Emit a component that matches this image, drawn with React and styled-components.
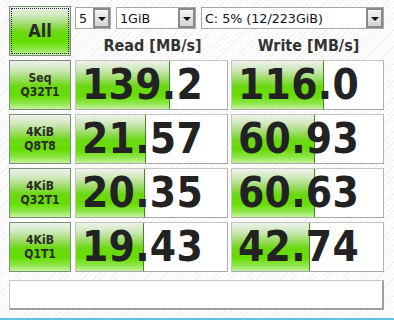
import React from "react";
import styled, { createGlobalStyle } from "styled-components";

const GlobalStyle = createGlobalStyle`
  html, body {
    margin: 0;
    padding: 0;
  }
  body {
    font-family: "DejaVu Sans Condensed", "DejaVu Sans", sans-serif;
    font-stretch: condensed;
  }
`;

const rows = [
  { top: "Seq", bottom: "Q32T1", read: "139.2", write: "116.0", rw: 94, ww: 92 },
  { top: "4KiB", bottom: "Q8T8", read: "21.57", write: "60.93", rw: 70, ww: 83 },
  { top: "4KiB", bottom: "Q32T1", read: "20.35", write: "60.63", rw: 69, ww: 83 },
  { top: "4KiB", bottom: "Q1T1", read: "19.43", write: "42.74", rw: 68, ww: 78 },
];

const green = `linear-gradient(
  to bottom,
  #eef2ea 0%,
  #cfe8bc 18%,
  #9fdc6a 36%,
  #6cd814 52%,
  #66dd00 72%,
  #8ee64a 88%,
  #c4f49c 100%
)`;

const Page = styled.div`
  width: 394px;
  height: 320px;
  display: flex;
  flex-direction: column;
  box-sizing: border-box;
  background: repeating-linear-gradient(
    135deg,
    #ffffff 0px,
    #ffffff 3px,
    #f1f1f1 3px,
    #f1f1f1 4px
  );
`;

const Board = styled.div`
  display: grid;
  grid-template-columns: 63px 153px 153px;
  grid-auto-rows: 50px;
  column-gap: 3px;
  row-gap: 4px;
  padding: 6px 0 0 9px;
`;

const GreenButton = styled.div`
  width: 62px;
  box-sizing: border-box;
  border: 1px solid #7c8f7c;
  background: ${green};
  color: #2a2a2a;
  font-weight: bold;
  display: flex;
  flex-direction: column;
  align-items: center;
  justify-content: center;
  text-align: center;
  font-size: ${(p) => (p.$big ? "18px" : "12px")};
  line-height: ${(p) => (p.$big ? "20px" : "14px")};
  outline: ${(p) => (p.$focus ? "1px dotted #302050" : "none")};
  outline-offset: -3px;
`;

const TopCell = styled.div`
  grid-column: 2 / span 2;
  display: flex;
  flex-direction: column;
`;

const Combos = styled.div`
  display: flex;
  gap: 5px;
  margin-top: 1px;
`;

const Combo = styled.div`
  width: ${(p) => p.$w}px;
  height: 22px;
  box-sizing: border-box;
  border: 1px solid #a8a8a8;
  background: #fff;
  display: flex;
  align-items: center;
  font-family: "DejaVu Sans", sans-serif;
  font-stretch: normal;
  font-size: 12.7px;
  color: #101018;
`;

const ComboText = styled.span`
  flex: 1;
  padding-left: 3px;
  white-space: nowrap;
  overflow: hidden;
`;

const Arrow = styled.span`
  width: 17px;
  height: 20px;
  box-sizing: border-box;
  border: 2px solid #8a8a8a;
  background: linear-gradient(to bottom, #f4f4f4, #d4d4d4);
  display: flex;
  align-items: center;
  justify-content: center;
  &::after {
    content: "";
    border-left: 4px solid transparent;
    border-right: 4px solid transparent;
    border-top: 4px solid #111;
    margin-top: 1px;
  }
`;

const Headers = styled.div`
  display: grid;
  grid-template-columns: 153px 153px;
  column-gap: 3px;
  margin-top: 7px;
`;

const Header = styled.div`
  text-align: center;
  font-weight: bold;
  font-size: 16px;
  color: #333;
  padding-left: ${(p) => p.$shift || 0}px;
`;

const ValueBox = styled.div`
  position: relative;
  box-sizing: border-box;
  border: 1px solid #c4c4c4;
  border-right-color: #b0b0b0;
  border-bottom-color: #a8a8a8;
  background: #fff;
  overflow: hidden;
  display: flex;
  align-items: center;
`;

const Bar = styled.div`
  position: absolute;
  left: 0;
  top: 0;
  bottom: 0;
  box-sizing: border-box;
  border-right: 1px solid #3f8a1f;
  background: ${green};
`;

const Value = styled.span`
  position: relative;
  padding-left: 6px;
  font-size: 42px;
  font-weight: bold;
  color: #222;
  line-height: 48px;
  letter-spacing: 0.3px;
`;

const Status = styled.div`
  margin: 8px 0 0 9px;
  width: 375px;
  height: 30px;
  box-sizing: border-box;
  border: 1px solid #c8c8c8;
  border-right: 2px solid #a0a0a0;
  border-bottom: 2px solid #a0a0a0;
  background: #fff;
`;

const BlueLine = styled.div`
  margin-top: auto;
  height: 2px;
  background: #5cc3e4;
`;

export default function App() {
  return (
    <>
      <GlobalStyle />
      <Page>
        <Board>
          <GreenButton $big $focus>
            All
          </GreenButton>
          <TopCell>
            <Combos>
              <Combo $w={36}>
                <ComboText>5</ComboText>
                <Arrow />
              </Combo>
              <Combo $w={80}>
                <ComboText>1GiB</ComboText>
                <Arrow />
              </Combo>
              <Combo $w={183}>
                <ComboText>C: 5% (12/223GiB)</ComboText>
                <Arrow />
              </Combo>
            </Combos>
            <Headers>
              <Header $shift={2}>Read [MB/s]</Header>
              <Header $shift={2}>Write [MB/s]</Header>
            </Headers>
          </TopCell>
          {rows.map((r, i) => (
            <React.Fragment key={i}>
              <GreenButton>
                <span>{r.top}</span>
                <span>{r.bottom}</span>
              </GreenButton>
              <ValueBox>
                <Bar style={{ width: r.rw }} />
                <Value>{r.read}</Value>
              </ValueBox>
              <ValueBox>
                <Bar style={{ width: r.ww }} />
                <Value>{r.write}</Value>
              </ValueBox>
            </React.Fragment>
          ))}
        </Board>
        <Status />
        <BlueLine />
      </Page>
    </>
  );
}
